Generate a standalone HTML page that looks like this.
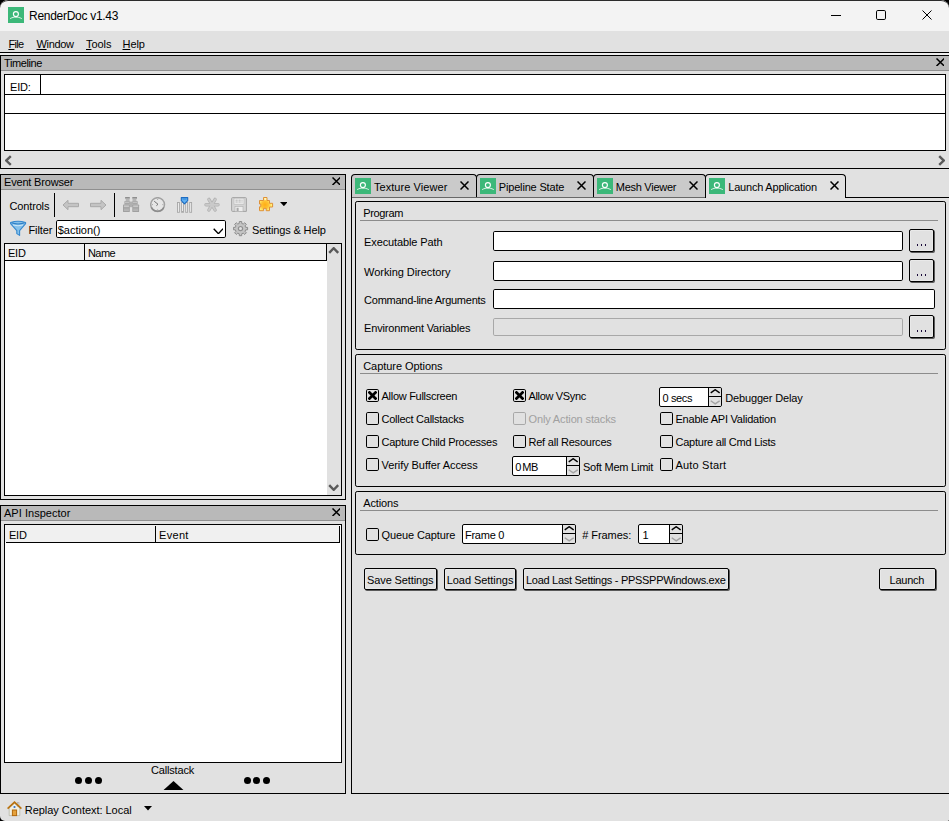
<!DOCTYPE html>
<html><head><meta charset="utf-8"><title>RenderDoc v1.43</title>
<style>
html,body{margin:0;padding:0}
body{width:949px;height:821px;overflow:hidden;background:#000;font-family:"Liberation Sans",sans-serif;}
#w{position:relative;width:949px;height:821px;background:#e1e1e1;border-radius:8px 8px 1.5px 5px;overflow:hidden}
#w>div,#w>svg,#w>span{position:absolute;display:block}
.t{white-space:pre;line-height:16px;height:16px}
.t u{text-decoration:underline;text-underline-offset:1px}
</style></head><body><div id="w">
<div style="left:0px;top:0px;width:949px;height:31px;background:#f3f3f3;border-top:1px solid #2b2b2b;box-sizing:border-box;border-radius:8px 8px 0 0"></div>
<svg style="left:8px;top:7px" width="16" height="16" viewBox="0 0 16 16"><rect width="16" height="16" fill="#3cb879"/><circle cx="7.9" cy="7.1" r="2.5" fill="none" stroke="#fff" stroke-width="1.15"/><path d="M2.1 11.6 C4.2 10.4 6 10.1 7.9 10.1 C9.8 10.1 11.6 10.4 13.8 11.6" fill="none" stroke="#fff" stroke-width="0.9" stroke-linecap="butt" opacity="0.9"/></svg>
<span class="t" style="left:29.00px;top:8px;font-size:12px;letter-spacing:-0.285px;color:#000">RenderDoc v1.43</span>
<div style="left:831px;top:15px;width:10px;height:1px;background:#000"></div>
<svg style="left:875px;top:9px" width="12" height="12" viewBox="0 0 12 12"><rect x="1.5" y="1.5" width="9" height="9" rx="1.3" fill="none" stroke="#000" stroke-width="1"/></svg>
<svg style="left:922px;top:10px" width="10" height="10" viewBox="0 0 10 10"><path d="M0.5 0.5 L9.5 9.5 M9.5 0.5 L0.5 9.5" stroke="#000" stroke-width="1.0" fill="none"/></svg>
<span class="t" style="left:8.40px;top:36px;font-size:11px;letter-spacing:-0.675px;color:#000"><u>F</u>ile</span>
<span class="t" style="left:36.50px;top:36px;font-size:11px;letter-spacing:-0.345px;color:#000"><u>W</u>indow</span>
<span class="t" style="left:86.00px;top:36px;font-size:11px;letter-spacing:-0.070px;color:#000"><u>T</u>ools</span>
<span class="t" style="left:122.50px;top:36px;font-size:11px;letter-spacing:-0.074px;color:#000"><u>H</u>elp</span>
<div style="left:0px;top:52px;width:949px;height:1px;background:#000"></div>
<div style="left:0px;top:53px;width:949px;height:2px;background:#ededed"></div>
<div style="left:0px;top:55px;width:949px;height:1px;background:#000"></div>
<div style="left:1px;top:56px;width:948px;height:14px;background:#b9b9b9"></div>
<div style="left:1px;top:70px;width:948px;height:1px;background:#8f8f8f"></div>
<div style="left:0px;top:55px;width:1px;height:114px;background:#000"></div>
<div style="left:0px;top:168px;width:949px;height:1px;background:#000"></div>
<span class="t" style="left:4.00px;top:55px;font-size:11px;letter-spacing:-0.394px;color:#000">Timeline</span>
<svg style="left:935.7px;top:57.8px" width="8.799999999999955" height="8.600000000000009" viewBox="0 0 8.799999999999955 8.600000000000009"><path d="M0.5 0.5 L8.299999999999955 8.100000000000009 M8.299999999999955 0.5 L0.5 8.100000000000009" stroke="#000" stroke-width="1.5" fill="none"/></svg>
<div style="left:4px;top:74px;width:942px;height:77px;box-sizing:border-box;border:1px solid #000;background:#fff;border-radius:0px;"></div>
<div style="left:5px;top:94px;width:940px;height:1px;background:#000"></div>
<div style="left:5px;top:113px;width:940px;height:1px;background:#000"></div>
<div style="left:40px;top:75px;width:1px;height:19px;background:#000"></div>
<span class="t" style="left:10.00px;top:79px;font-size:11px;letter-spacing:-0.164px;color:#000">EID:</span>
<svg style="left:4.8px;top:155.4px" width="7.000000000000001" height="11.199999999999989" viewBox="0 0 7.000000000000001 11.199999999999989"><path d="M5.800000000000001 1.2 L1.2 5.599999999999994 L5.800000000000001 9.99999999999999" stroke="#595959" stroke-width="2.4" fill="none" stroke-linejoin="miter"/></svg>
<svg style="left:938.2px;top:155.4px" width="7.0" height="11.199999999999989" viewBox="0 0 7.0 11.199999999999989"><path d="M1.2 1.2 L5.8 5.599999999999994 L1.2 9.99999999999999" stroke="#595959" stroke-width="2.4" fill="none" stroke-linejoin="miter"/></svg>
<div style="left:0px;top:174px;width:346px;height:326px;box-sizing:border-box;border:1px solid #000;background:#e1e1e1;border-radius:0px;"></div>
<div style="left:1px;top:175px;width:344px;height:14px;background:#b9b9b9"></div>
<div style="left:1px;top:189px;width:344px;height:1px;background:#8f8f8f"></div>
<span class="t" style="left:4.00px;top:174px;font-size:11px;letter-spacing:-0.177px;color:#000">Event Browser</span>
<svg style="left:331.6px;top:176.6px" width="8.799999999999955" height="8.599999999999994" viewBox="0 0 8.799999999999955 8.599999999999994"><path d="M0.5 0.5 L8.299999999999955 8.099999999999994 M8.299999999999955 0.5 L0.5 8.099999999999994" stroke="#000" stroke-width="1.5" fill="none"/></svg>
<span class="t" style="left:9.50px;top:198px;font-size:11px;letter-spacing:-0.151px;color:#000">Controls</span>
<div style="left:54px;top:193px;width:1px;height:24px;background:#000"></div>
<div style="left:114px;top:193px;width:1px;height:24px;background:#000"></div>
<svg style="left:62px;top:197px" width="18" height="16" viewBox="0 0 18 16"><path d="M1 8 L6 3.3 L6 6.3 L16.5 6.3 L16.5 9.7 L6 9.7 L6 12.7 Z" fill="#c4c4c4" stroke="#a9a9a9" stroke-width="1" stroke-linejoin="round"/></svg>
<svg style="left:89px;top:197px" width="18" height="16" viewBox="0 0 18 16"><path d="M17 8 L12 3.3 L12 6.3 L1.5 6.3 L1.5 9.7 L12 9.7 L12 12.7 Z" fill="#c4c4c4" stroke="#a9a9a9" stroke-width="1" stroke-linejoin="round"/></svg>
<svg style="left:123px;top:197px" width="17" height="16" viewBox="0 0 17 16"><rect x="6.6" y="4.6" width="3" height="5.6" fill="#b0b0b0"/>
<g><rect x="2.1" y="0" width="4.7" height="1.7" fill="#8f8f8f"/><rect x="2.7" y="1.7" width="3.9" height="2.6" fill="#b6b6b6"/><rect x="1.4" y="4.2" width="5.4" height="3.4" fill="#a4a4a4"/><rect x="2" y="5" width="4.2" height="1.1" fill="#c2c2c2"/><rect x="0" y="7.6" width="6.8" height="7.5" rx="0.7" fill="#a0a0a0"/><rect x="0.9" y="8.5" width="5" height="1.3" fill="#d2d2d2"/><rect x="0.9" y="10.6" width="5" height="1" fill="#b4b4b4"/><rect x="0.9" y="12.5" width="5" height="1.1" fill="#c6c6c6"/></g>
<g transform="translate(16.1,0) scale(-1,1)"><rect x="2.1" y="0" width="4.7" height="1.7" fill="#8f8f8f"/><rect x="2.7" y="1.7" width="3.9" height="2.6" fill="#b6b6b6"/><rect x="1.4" y="4.2" width="5.4" height="3.4" fill="#a4a4a4"/><rect x="2" y="5" width="4.2" height="1.1" fill="#c2c2c2"/><rect x="0" y="7.6" width="6.8" height="7.5" rx="0.7" fill="#a0a0a0"/><rect x="0.9" y="8.5" width="5" height="1.3" fill="#d2d2d2"/><rect x="0.9" y="10.6" width="5" height="1" fill="#b4b4b4"/><rect x="0.9" y="12.5" width="5" height="1.1" fill="#c6c6c6"/></g></svg>
<svg style="left:150px;top:197px" width="16" height="16" viewBox="0 0 16 16"><circle cx="7.6" cy="7.6" r="6.9" fill="#e6e6e6" stroke="#a2a2a2" stroke-width="1.5"/><path d="M1.4 10.4 A6.9 6.9 0 0 0 13.8 10.4" fill="none" stroke="#8c8c8c" stroke-width="1.5"/><path d="M4.2 4.2 L8 7.3 L6.4 8.7" fill="none" stroke="#6c6c6c" stroke-width="0.95"/><g fill="#9a9a9a"><rect x="7.2" y="2" width="0.9" height="0.9"/><rect x="7.2" y="12.4" width="0.9" height="0.9"/><rect x="2" y="7.2" width="0.9" height="0.9"/><rect x="12.4" y="7.2" width="0.9" height="0.9"/></g></svg>
<svg style="left:177px;top:197px" width="16" height="16" viewBox="0 0 16 16"><g fill="#efefef" stroke="#a6a6a6" stroke-width="0.9"><rect x="0.5" y="5.5" width="1.9" height="9.8"/><rect x="4.6" y="5.5" width="1.9" height="9.8"/><rect x="8.7" y="5.5" width="1.9" height="9.8"/><rect x="12.7" y="5.5" width="1.9" height="9.8"/></g>
<path d="M4.3 0.6 L10.7 0.6 L10.7 3.6 L7.5 6.9 L4.3 3.6 Z" fill="#5fb0f2" stroke="#1d6cc2" stroke-width="1.1" stroke-linejoin="round"/><path d="M5.6 2.1 H9.4" stroke="#2f86d8" stroke-width="0.9"/></svg>
<svg style="left:204px;top:197px" width="16" height="16" viewBox="0 0 16 16"><g stroke="#b2b2b2" stroke-width="3.4" stroke-linecap="round"><path d="M2 7.7 L14 7.7"/><path d="M4.9 2.4 L11.1 13"/><path d="M11.1 2.4 L4.9 13"/></g><g stroke="#cacaca" stroke-width="1.9" stroke-linecap="round"><path d="M2 7.7 L14 7.7"/><path d="M4.9 2.4 L11.1 13"/><path d="M11.1 2.4 L4.9 13"/></g></svg>
<svg style="left:231px;top:197px" width="16" height="16" viewBox="0 0 16 16"><path d="M0.6 1.6 Q0.6 0.6 1.6 0.6 L14.4 0.6 Q15.4 0.6 15.4 1.6 L15.4 14.4 L1.6 14.4 Q0.6 14.4 0.6 13.4 Z" fill="#d4d4d4" stroke="#a4a4a4" stroke-width="1"/>
<rect x="3" y="1.2" width="10" height="6" fill="#ececec" stroke="#b8b8b8" stroke-width="0.6"/>
<path d="M4.5 3.2 H11.5 M4.5 5 H11.5" stroke="#a8a8a8" stroke-width="0.8" stroke-dasharray="2.2 0.8"/>
<rect x="4" y="9.6" width="8" height="4.8" fill="#ededed" stroke="#b0b0b0" stroke-width="0.6"/><rect x="5.6" y="10.8" width="2" height="3.2" fill="#a8a8a8"/></svg>
<svg style="left:259px;top:197px" width="15" height="15" viewBox="0 0 15 15"><defs><radialGradient id="pz" cx="0.42" cy="0.55" r="0.5"><stop offset="0" stop-color="#ffad14"/><stop offset="0.55" stop-color="#ffc233"/><stop offset="1" stop-color="#fff27e"/></radialGradient></defs><path d="M4.5 0.5 H8 V3.5 H10.5 V6.3 H13.6 V10 H10.5 V13.7 H7.2 V11.3 H4.6 V13.7 H0.5 V9.8 H1.8 V7 H0.5 V3.5 H4.5 Z" fill="url(#pz)" stroke="#df9037" stroke-width="1" stroke-linejoin="round"/><rect x="5.4" y="1.2" width="1.8" height="1.6" fill="#fff6d8"/></svg>
<svg style="left:279.6px;top:202px" width="7.7999999999999545" height="4.199999999999989" viewBox="0 0 7.7999999999999545 4.199999999999989"><path d="M0 0 L7.7999999999999545 0 L3.8999999999999773 4.199999999999989 Z" fill="#000"/></svg>
<svg style="left:10px;top:220px" width="17" height="17" viewBox="0 0 17 17"><path d="M0.6 2.5 Q8 0.1 15.6 2.5 L15.6 3.6 L9.6 10.6 L9.6 15.4 L6.8 13.6 L6.8 10.6 L0.6 3.6 Z" fill="#86c1ea" stroke="#3588cf" stroke-width="1.1" stroke-linejoin="round"/><path d="M1.6 2.8 Q8 5.2 14.6 2.8" fill="none" stroke="#2f7fc6" stroke-width="1.2"/><path d="M3 5 Q8 6.6 13 5" fill="none" stroke="#d6ecfa" stroke-width="0.9"/></svg>
<span class="t" style="left:28.50px;top:222px;font-size:11px;letter-spacing:-0.109px;color:#000">Filter</span>
<div style="left:56px;top:220px;width:170px;height:18px;box-sizing:border-box;border:1px solid #000;background:#fff;border-radius:1.8px;"></div>
<span class="t" style="left:57.70px;top:222px;font-size:11px;letter-spacing:-0.012px;color:#000">$action()</span>
<svg style="left:212.6px;top:227.8px" width="10.800000000000011" height="6.399999999999977" viewBox="0 0 10.800000000000011 6.399999999999977"><path d="M0.7 0.7 L5.400000000000006 5.699999999999977 L10.100000000000012 0.7" stroke="#000" stroke-width="1.4" fill="none" stroke-linejoin="miter"/></svg>
<svg style="left:233px;top:221px" width="16" height="16" viewBox="0 0 16 16"><path d="M6.22 2.46 L6.32 0.50 L8.68 0.50 L8.78 2.46 L10.23 3.06 L11.69 1.74 L13.36 3.41 L12.04 4.87 L12.64 6.32 L14.60 6.42 L14.60 8.78 L12.64 8.88 L12.04 10.33 L13.36 11.79 L11.69 13.46 L10.23 12.14 L8.78 12.74 L8.68 14.70 L6.32 14.70 L6.22 12.74 L4.77 12.14 L3.31 13.46 L1.64 11.79 L2.96 10.33 L2.36 8.88 L0.40 8.78 L0.40 6.42 L2.36 6.32 L2.96 4.87 L1.64 3.41 L3.31 1.74 L4.77 3.06Z" fill="#c4c4c4" stroke="#8c8c8c" stroke-width="1" stroke-linejoin="round"/><circle cx="7.5" cy="7.6" r="2.1" fill="#e1e1e1" stroke="#909090" stroke-width="1.2"/></svg>
<span class="t" style="left:252.00px;top:222px;font-size:11px;letter-spacing:-0.144px;color:#000">Settings &amp; Help</span>
<div style="left:4px;top:243px;width:338px;height:253px;box-sizing:border-box;border:1px solid #000;background:#fff;border-radius:0px;"></div>
<div style="left:5px;top:244px;width:321px;height:16px;background:#f0f0f0"></div>
<div style="left:5px;top:260px;width:322px;height:1px;background:#000"></div>
<div style="left:326px;top:244px;width:1px;height:16px;background:#000"></div>
<span class="t" style="left:8.00px;top:245px;font-size:11px;letter-spacing:-0.218px;color:#000">EID</span>
<div style="left:84px;top:244px;width:1px;height:16px;background:#000"></div>
<span class="t" style="left:87.90px;top:245px;font-size:11px;letter-spacing:-0.514px;color:#000">Name</span>
<div style="left:327px;top:244px;width:14px;height:251px;background:#e1e1e1"></div>
<svg style="left:328.4px;top:247.4px" width="11.400000000000034" height="7.0" viewBox="0 0 11.400000000000034 7.0"><path d="M1.2 5.8 L5.700000000000017 1.2 L10.200000000000035 5.8" stroke="#595959" stroke-width="2.4" fill="none" stroke-linejoin="miter"/></svg>
<svg style="left:328.4px;top:484.4px" width="11.400000000000034" height="7.0" viewBox="0 0 11.400000000000034 7.0"><path d="M1.2 1.2 L5.700000000000017 5.8 L10.200000000000035 1.2" stroke="#595959" stroke-width="2.4" fill="none" stroke-linejoin="miter"/></svg>
<div style="left:0px;top:505px;width:346px;height:289px;box-sizing:border-box;border:1px solid #000;background:#e1e1e1;border-radius:0px;"></div>
<div style="left:1px;top:506px;width:344px;height:14px;background:#b9b9b9"></div>
<div style="left:1px;top:520px;width:344px;height:1px;background:#8f8f8f"></div>
<span class="t" style="left:4.00px;top:505px;font-size:11px;letter-spacing:0.031px;color:#000">API Inspector</span>
<svg style="left:331.6px;top:507.6px" width="8.799999999999955" height="8.600000000000023" viewBox="0 0 8.799999999999955 8.600000000000023"><path d="M0.5 0.5 L8.299999999999955 8.100000000000023 M8.299999999999955 0.5 L0.5 8.100000000000023" stroke="#000" stroke-width="1.5" fill="none"/></svg>
<div style="left:4px;top:524px;width:338px;height:239px;box-sizing:border-box;border:1px solid #000;background:#fff;border-radius:0px;"></div>
<div style="left:5px;top:525px;width:334px;height:17px;background:#f0f0f0"></div>
<div style="left:6px;top:542px;width:334px;height:1px;background:#000"></div>
<div style="left:339px;top:526px;width:1px;height:16px;background:#000"></div>
<span class="t" style="left:9.00px;top:527px;font-size:11px;letter-spacing:-0.218px;color:#000">EID</span>
<div style="left:155px;top:526px;width:1px;height:16px;background:#000"></div>
<span class="t" style="left:159.00px;top:527px;font-size:11px;letter-spacing:0.318px;color:#000">Event</span>
<div style="left:75.0px;top:776.5px;width:7px;height:7px;background:#000;border-radius:50%"></div>
<div style="left:84.7px;top:776.5px;width:7px;height:7px;background:#000;border-radius:50%"></div>
<div style="left:94.5px;top:776.5px;width:7px;height:7px;background:#000;border-radius:50%"></div>
<div style="left:243.5px;top:776.5px;width:7px;height:7px;background:#000;border-radius:50%"></div>
<div style="left:253.3px;top:776.5px;width:7px;height:7px;background:#000;border-radius:50%"></div>
<div style="left:263.3px;top:776.5px;width:7px;height:7px;background:#000;border-radius:50%"></div>
<span class="t" style="left:151.00px;top:762px;font-size:11px;letter-spacing:-0.178px;color:#000">Callstack</span>
<svg style="left:162.6px;top:780.5px" width="21.0" height="9.5" viewBox="0 0 21.0 9.5"><path d="M0 9.5 L10.5 0 L21.0 9.5 Z" fill="#000"/></svg>
<svg style="left:7px;top:800.5px" width="15" height="16" viewBox="0 0 15 16"><path d="M2.2 7 L2.2 14.6 L12.8 14.6 L12.8 7 L7.5 2.4 Z" fill="#f1f0e3" stroke="#b9b9aa" stroke-width="0.8"/>
<rect x="10.4" y="1.6" width="1.6" height="4" fill="#d8d8d0" stroke="#aaa" stroke-width="0.5"/>
<path d="M0.6 7.6 L7.5 1.2 L14.4 7.6" fill="none" stroke="#b9720f" stroke-width="1.7" stroke-linejoin="miter"/>
<rect x="5.4" y="9" width="4.2" height="5.6" fill="#e5a13a" stroke="#b3690c" stroke-width="1"/>
<circle cx="7.5" cy="6" r="1.1" fill="#2f6fd0"/></svg>
<span class="t" style="left:24.80px;top:802px;font-size:11px;letter-spacing:-0.036px;color:#000">Replay Context: Local</span>
<svg style="left:143.5px;top:806px" width="8.0" height="4.600000000000023" viewBox="0 0 8.0 4.600000000000023"><path d="M0 0 L8.0 0 L4.0 4.600000000000023 Z" fill="#000"/></svg>
<div style="left:351px;top:177px;width:1px;height:617px;background:#000"></div>
<div style="left:351px;top:793px;width:598px;height:1px;background:#000"></div>
<div style="left:352px;top:197px;width:353px;height:1px;background:#686868"></div>
<div style="left:846px;top:197px;width:103px;height:1px;background:#000"></div>
<div style="left:351px;top:174px;width:126px;height:23px;box-sizing:border-box;border:1px solid #000;border-bottom:none;border-radius:4px 4px 0 0;background:#cacaca"></div>
<svg style="left:355px;top:178px" width="16" height="16" viewBox="0 0 16 16"><rect width="16" height="16" fill="#3cb879"/><circle cx="7.9" cy="7.1" r="2.5" fill="none" stroke="#fff" stroke-width="1.15"/><path d="M2.1 11.6 C4.2 10.4 6 10.1 7.9 10.1 C9.8 10.1 11.6 10.4 13.8 11.6" fill="none" stroke="#fff" stroke-width="0.9" stroke-linecap="butt" opacity="0.9"/></svg>
<span class="t" style="left:373.90px;top:179px;font-size:11px;letter-spacing:0.073px;color:#000">Texture Viewer</span>
<svg style="left:459.5px;top:181.3px" width="9.0" height="9.0" viewBox="0 0 9.0 9.0"><path d="M0.5 0.5 L8.5 8.5 M8.5 0.5 L0.5 8.5" stroke="#000" stroke-width="1.5" fill="none"/></svg>
<div style="left:476px;top:174px;width:118px;height:23px;box-sizing:border-box;border:1px solid #000;border-bottom:none;border-radius:4px 4px 0 0;background:#cacaca"></div>
<svg style="left:480px;top:178px" width="16" height="16" viewBox="0 0 16 16"><rect width="16" height="16" fill="#3cb879"/><circle cx="7.9" cy="7.1" r="2.5" fill="none" stroke="#fff" stroke-width="1.15"/><path d="M2.1 11.6 C4.2 10.4 6 10.1 7.9 10.1 C9.8 10.1 11.6 10.4 13.8 11.6" fill="none" stroke="#fff" stroke-width="0.9" stroke-linecap="butt" opacity="0.9"/></svg>
<span class="t" style="left:498.80px;top:179px;font-size:11px;letter-spacing:-0.175px;color:#000">Pipeline State</span>
<svg style="left:576.5px;top:181.3px" width="9.0" height="9.0" viewBox="0 0 9.0 9.0"><path d="M0.5 0.5 L8.5 8.5 M8.5 0.5 L0.5 8.5" stroke="#000" stroke-width="1.5" fill="none"/></svg>
<div style="left:593px;top:174px;width:113px;height:23px;box-sizing:border-box;border:1px solid #000;border-bottom:none;border-radius:4px 4px 0 0;background:#cacaca"></div>
<svg style="left:597px;top:178px" width="16" height="16" viewBox="0 0 16 16"><rect width="16" height="16" fill="#3cb879"/><circle cx="7.9" cy="7.1" r="2.5" fill="none" stroke="#fff" stroke-width="1.15"/><path d="M2.1 11.6 C4.2 10.4 6 10.1 7.9 10.1 C9.8 10.1 11.6 10.4 13.8 11.6" fill="none" stroke="#fff" stroke-width="0.9" stroke-linecap="butt" opacity="0.9"/></svg>
<span class="t" style="left:615.80px;top:179px;font-size:11px;letter-spacing:-0.278px;color:#000">Mesh Viewer</span>
<svg style="left:688.6px;top:181.3px" width="9.0" height="9.0" viewBox="0 0 9.0 9.0"><path d="M0.5 0.5 L8.5 8.5 M8.5 0.5 L0.5 8.5" stroke="#000" stroke-width="1.5" fill="none"/></svg>
<div style="left:705px;top:174px;width:141px;height:24px;box-sizing:border-box;border:1px solid #000;border-bottom:none;border-radius:4px 4px 0 0;background:#e1e1e1"></div>
<svg style="left:709px;top:178px" width="16" height="16" viewBox="0 0 16 16"><rect width="16" height="16" fill="#3cb879"/><circle cx="7.9" cy="7.1" r="2.5" fill="none" stroke="#fff" stroke-width="1.15"/><path d="M2.1 11.6 C4.2 10.4 6 10.1 7.9 10.1 C9.8 10.1 11.6 10.4 13.8 11.6" fill="none" stroke="#fff" stroke-width="0.9" stroke-linecap="butt" opacity="0.9"/></svg>
<span class="t" style="left:728.30px;top:179px;font-size:11px;letter-spacing:-0.209px;color:#000">Launch Application</span>
<svg style="left:829.7px;top:181.3px" width="9.0" height="9.0" viewBox="0 0 9.0 9.0"><path d="M0.5 0.5 L8.5 8.5 M8.5 0.5 L0.5 8.5" stroke="#000" stroke-width="1.5" fill="none"/></svg>
<div style="left:355px;top:201px;width:591px;height:149px;box-sizing:border-box;border:1px solid #000;background:transparent;border-radius:2.2px;"></div>
<span class="t" style="left:363.20px;top:205px;font-size:11px;letter-spacing:-0.330px;color:#000">Program</span>
<div style="left:360px;top:220px;width:578px;height:1px;background:#8c8c8c"></div>
<div style="left:355px;top:354px;width:591px;height:133px;box-sizing:border-box;border:1px solid #000;background:transparent;border-radius:2.2px;"></div>
<span class="t" style="left:363.20px;top:358px;font-size:11px;letter-spacing:-0.050px;color:#000">Capture Options</span>
<div style="left:360px;top:373px;width:578px;height:1px;background:#8c8c8c"></div>
<div style="left:355px;top:491px;width:591px;height:64px;box-sizing:border-box;border:1px solid #000;background:transparent;border-radius:2.2px;"></div>
<span class="t" style="left:363.20px;top:495px;font-size:11px;letter-spacing:-0.145px;color:#000">Actions</span>
<div style="left:360px;top:510px;width:578px;height:1px;background:#8c8c8c"></div>
<span class="t" style="left:364.10px;top:234px;font-size:11px;letter-spacing:-0.115px;color:#000">Executable Path</span>
<div style="left:493px;top:231px;width:410px;height:20px;box-sizing:border-box;border:1px solid #000;background:#fff;border-radius:1.8px;"></div>
<div style="left:909px;top:229px;width:25px;height:23px;box-sizing:border-box;border:1px solid #000;background:#e1e1e1;border-radius:2px;box-shadow:1px 1px 0 0 rgba(0,0,0,.6), inset 0 0 0 1px #e9e9e9"></div>
<div style="left:916.8px;top:244px;width:1.4px;height:2px;background:#1a0a3a"></div>
<div style="left:920.8px;top:244px;width:1.4px;height:2px;background:#1a0a3a"></div>
<div style="left:924.8px;top:244px;width:1.4px;height:2px;background:#1a0a3a"></div>
<span class="t" style="left:364.10px;top:264px;font-size:11px;letter-spacing:-0.057px;color:#000">Working Directory</span>
<div style="left:493px;top:261px;width:410px;height:20px;box-sizing:border-box;border:1px solid #000;background:#fff;border-radius:1.8px;"></div>
<div style="left:909px;top:259px;width:25px;height:23px;box-sizing:border-box;border:1px solid #000;background:#e1e1e1;border-radius:2px;box-shadow:1px 1px 0 0 rgba(0,0,0,.6), inset 0 0 0 1px #e9e9e9"></div>
<div style="left:916.8px;top:274px;width:1.4px;height:2px;background:#1a0a3a"></div>
<div style="left:920.8px;top:274px;width:1.4px;height:2px;background:#1a0a3a"></div>
<div style="left:924.8px;top:274px;width:1.4px;height:2px;background:#1a0a3a"></div>
<span class="t" style="left:364.10px;top:292px;font-size:11px;letter-spacing:-0.261px;color:#000">Command-line Arguments</span>
<div style="left:493px;top:289px;width:442px;height:20px;box-sizing:border-box;border:1px solid #000;background:#fff;border-radius:1.8px;"></div>
<span class="t" style="left:364.10px;top:320px;font-size:11px;letter-spacing:-0.177px;color:#000">Environment Variables</span>
<div style="left:493px;top:318px;width:410px;height:18px;box-sizing:border-box;border:1px solid #a8a8a8;background:#e1e1e1;border-radius:1.8px;"></div>
<div style="left:909px;top:315px;width:25px;height:23px;box-sizing:border-box;border:1px solid #000;background:#e1e1e1;border-radius:2px;box-shadow:1px 1px 0 0 rgba(0,0,0,.6), inset 0 0 0 1px #e9e9e9"></div>
<div style="left:916.8px;top:330px;width:1.4px;height:2px;background:#1a0a3a"></div>
<div style="left:920.8px;top:330px;width:1.4px;height:2px;background:#1a0a3a"></div>
<div style="left:924.8px;top:330px;width:1.4px;height:2px;background:#1a0a3a"></div>
<div style="left:366px;top:389px;width:13px;height:13px;box-sizing:border-box;border:1px solid #000;background:#e1e1e1;border-radius:1.8px;"></div>
<svg style="left:368px;top:391px" width="9" height="9" viewBox="0 0 9 9"><path d="M1.5 1.5 L7.5 7.5 M7.5 1.5 L1.5 7.5" stroke="#000" stroke-width="2.7" stroke-linecap="square" fill="none"/></svg>
<span class="t" style="left:381.50px;top:388px;font-size:11px;letter-spacing:-0.279px;color:#000">Allow Fullscreen</span>
<div style="left:366px;top:412px;width:13px;height:13px;box-sizing:border-box;border:1px solid #000;background:#e1e1e1;border-radius:1.8px;"></div>
<span class="t" style="left:381.50px;top:411px;font-size:11px;letter-spacing:-0.259px;color:#000">Collect Callstacks</span>
<div style="left:366px;top:435px;width:13px;height:13px;box-sizing:border-box;border:1px solid #000;background:#e1e1e1;border-radius:1.8px;"></div>
<span class="t" style="left:381.50px;top:434px;font-size:11px;letter-spacing:-0.262px;color:#000">Capture Child Processes</span>
<div style="left:366px;top:458px;width:13px;height:13px;box-sizing:border-box;border:1px solid #000;background:#e1e1e1;border-radius:1.8px;"></div>
<span class="t" style="left:381.50px;top:457px;font-size:11px;letter-spacing:-0.070px;color:#000">Verify Buffer Access</span>
<div style="left:513px;top:389px;width:13px;height:13px;box-sizing:border-box;border:1px solid #000;background:#e1e1e1;border-radius:1.8px;"></div>
<svg style="left:515px;top:391px" width="9" height="9" viewBox="0 0 9 9"><path d="M1.5 1.5 L7.5 7.5 M7.5 1.5 L1.5 7.5" stroke="#000" stroke-width="2.7" stroke-linecap="square" fill="none"/></svg>
<span class="t" style="left:528.50px;top:388px;font-size:11px;letter-spacing:-0.343px;color:#000">Allow VSync</span>
<div style="left:513px;top:412px;width:13px;height:13px;box-sizing:border-box;border:1px solid #a8a8a8;background:#e1e1e1;border-radius:1.8px;"></div>
<span class="t" style="left:528.50px;top:411px;font-size:11px;letter-spacing:-0.140px;color:#a0a0a0">Only Action stacks</span>
<div style="left:513px;top:435px;width:13px;height:13px;box-sizing:border-box;border:1px solid #000;background:#e1e1e1;border-radius:1.8px;"></div>
<span class="t" style="left:528.50px;top:434px;font-size:11px;letter-spacing:-0.220px;color:#000">Ref all Resources</span>
<div style="left:660px;top:412px;width:13px;height:13px;box-sizing:border-box;border:1px solid #000;background:#e1e1e1;border-radius:1.8px;"></div>
<span class="t" style="left:675.50px;top:411px;font-size:11px;letter-spacing:-0.220px;color:#000">Enable API Validation</span>
<div style="left:660px;top:435px;width:13px;height:13px;box-sizing:border-box;border:1px solid #000;background:#e1e1e1;border-radius:1.8px;"></div>
<span class="t" style="left:675.50px;top:434px;font-size:11px;letter-spacing:-0.242px;color:#000">Capture all Cmd Lists</span>
<div style="left:660px;top:458px;width:13px;height:13px;box-sizing:border-box;border:1px solid #000;background:#e1e1e1;border-radius:1.8px;"></div>
<span class="t" style="left:675.50px;top:457px;font-size:11px;letter-spacing:0.187px;color:#000">Auto Start</span>
<div style="left:659px;top:387px;width:63px;height:20px;box-sizing:border-box;border:1px solid #000;background:#fff;border-radius:2px;"></div>
<div style="left:709px;top:388px;width:12px;height:18px;background:#e1e1e1;border-radius:0 1.5px 1.5px 0"></div>
<div style="left:708px;top:388px;width:1px;height:18px;background:#000"></div>
<div style="left:709px;top:396px;width:12px;height:1px;background:#000"></div>
<svg style="left:709.5px;top:389.2px" width="10.399999999999977" height="4.600000000000023" viewBox="0 0 10.399999999999977 4.600000000000023"><path d="M0.725 3.8750000000000226 L5.199999999999989 0.725 L9.674999999999978 3.8750000000000226" stroke="#000" stroke-width="1.45" fill="none" stroke-linejoin="miter"/></svg>
<svg style="left:709.5px;top:400px" width="10.399999999999977" height="4.5" viewBox="0 0 10.399999999999977 4.5"><path d="M0.725 0.725 L5.199999999999989 3.775 L9.674999999999978 0.725" stroke="#a3a3a3" stroke-width="1.45" fill="none" stroke-linejoin="miter"/></svg>
<span class="t" style="left:662.50px;top:390px;font-size:11px;letter-spacing:-0.378px;color:#000">0 secs</span>
<span class="t" style="left:725.30px;top:390px;font-size:11px;letter-spacing:-0.161px;color:#000">Debugger Delay</span>
<div style="left:512px;top:456px;width:68px;height:20px;box-sizing:border-box;border:1px solid #000;background:#fff;border-radius:2px;"></div>
<div style="left:567px;top:457px;width:12px;height:18px;background:#e1e1e1;border-radius:0 1.5px 1.5px 0"></div>
<div style="left:566px;top:457px;width:1px;height:18px;background:#000"></div>
<div style="left:567px;top:465px;width:12px;height:1px;background:#000"></div>
<svg style="left:567.5px;top:458.2px" width="10.399999999999977" height="4.600000000000023" viewBox="0 0 10.399999999999977 4.600000000000023"><path d="M0.725 3.8750000000000226 L5.199999999999989 0.725 L9.674999999999978 3.8750000000000226" stroke="#000" stroke-width="1.45" fill="none" stroke-linejoin="miter"/></svg>
<svg style="left:567.5px;top:469px" width="10.399999999999977" height="4.5" viewBox="0 0 10.399999999999977 4.5"><path d="M0.725 0.725 L5.199999999999989 3.775 L9.674999999999978 0.725" stroke="#a3a3a3" stroke-width="1.45" fill="none" stroke-linejoin="miter"/></svg>
<span class="t" style="left:515.30px;top:459px;font-size:11px;letter-spacing:-0.450px;color:#000;word-spacing:-1.22px">0 MB</span>
<span class="t" style="left:583.00px;top:459px;font-size:11px;letter-spacing:-0.227px;color:#000">Soft Mem Limit</span>
<div style="left:366px;top:528px;width:13px;height:13px;box-sizing:border-box;border:1px solid #000;background:#e1e1e1;border-radius:1.8px;"></div>
<span class="t" style="left:381.50px;top:527px;font-size:11px;letter-spacing:-0.110px;color:#000">Queue Capture</span>
<div style="left:462px;top:524px;width:114px;height:20px;box-sizing:border-box;border:1px solid #000;background:#fff;border-radius:2px;"></div>
<div style="left:563px;top:525px;width:12px;height:18px;background:#e1e1e1;border-radius:0 1.5px 1.5px 0"></div>
<div style="left:562px;top:525px;width:1px;height:18px;background:#000"></div>
<div style="left:563px;top:533px;width:12px;height:1px;background:#000"></div>
<svg style="left:563.5px;top:526.2px" width="10.399999999999977" height="4.599999999999909" viewBox="0 0 10.399999999999977 4.599999999999909"><path d="M0.725 3.874999999999909 L5.199999999999989 0.725 L9.674999999999978 3.874999999999909" stroke="#000" stroke-width="1.45" fill="none" stroke-linejoin="miter"/></svg>
<svg style="left:563.5px;top:537px" width="10.399999999999977" height="4.5" viewBox="0 0 10.399999999999977 4.5"><path d="M0.725 0.725 L5.199999999999989 3.775 L9.674999999999978 0.725" stroke="#a3a3a3" stroke-width="1.45" fill="none" stroke-linejoin="miter"/></svg>
<span class="t" style="left:465.00px;top:527px;font-size:11px;letter-spacing:-0.259px;color:#000">Frame 0</span>
<span class="t" style="left:582.20px;top:527px;font-size:11px;letter-spacing:-0.064px;color:#000"># Frames:</span>
<div style="left:638px;top:524px;width:45px;height:20px;box-sizing:border-box;border:1px solid #000;background:#fff;border-radius:2px;"></div>
<div style="left:670px;top:525px;width:12px;height:18px;background:#e1e1e1;border-radius:0 1.5px 1.5px 0"></div>
<div style="left:669px;top:525px;width:1px;height:18px;background:#000"></div>
<div style="left:670px;top:533px;width:12px;height:1px;background:#000"></div>
<svg style="left:670.5px;top:526.2px" width="10.399999999999977" height="4.599999999999909" viewBox="0 0 10.399999999999977 4.599999999999909"><path d="M0.725 3.874999999999909 L5.199999999999989 0.725 L9.674999999999978 3.874999999999909" stroke="#000" stroke-width="1.45" fill="none" stroke-linejoin="miter"/></svg>
<svg style="left:670.5px;top:537px" width="10.399999999999977" height="4.5" viewBox="0 0 10.399999999999977 4.5"><path d="M0.725 0.725 L5.199999999999989 3.775 L9.674999999999978 0.725" stroke="#a3a3a3" stroke-width="1.45" fill="none" stroke-linejoin="miter"/></svg>
<span class="t" style="left:642.50px;top:527px;font-size:11px;letter-spacing:0.000px;color:#000">1</span>
<div style="left:364px;top:568px;width:73px;height:22px;box-sizing:border-box;border:1px solid #000;background:#e1e1e1;border-radius:2px;box-shadow:1px 1px 0 0 rgba(0,0,0,.6), inset 0 0 0 1px #e9e9e9"></div>
<span class="t" style="left:367.00px;top:572px;font-size:11px;letter-spacing:-0.106px;color:#000">Save Settings</span>
<div style="left:444px;top:568px;width:72px;height:22px;box-sizing:border-box;border:1px solid #000;background:#e1e1e1;border-radius:2px;box-shadow:1px 1px 0 0 rgba(0,0,0,.6), inset 0 0 0 1px #e9e9e9"></div>
<span class="t" style="left:446.70px;top:572px;font-size:11px;letter-spacing:-0.048px;color:#000">Load Settings</span>
<div style="left:523px;top:568px;width:206px;height:22px;box-sizing:border-box;border:1px solid #000;background:#e1e1e1;border-radius:2px;box-shadow:1px 1px 0 0 rgba(0,0,0,.6), inset 0 0 0 1px #e9e9e9"></div>
<span class="t" style="left:526.00px;top:572px;font-size:11px;letter-spacing:-0.285px;color:#000">Load Last Settings - PPSSPPWindows.exe</span>
<div style="left:879px;top:568px;width:57px;height:22px;box-sizing:border-box;border:1px solid #000;background:#e1e1e1;border-radius:2px;box-shadow:1px 1px 0 0 rgba(0,0,0,.6), inset 0 0 0 1px #e9e9e9"></div>
<span class="t" style="left:889.50px;top:572px;font-size:11px;letter-spacing:-0.238px;color:#000">Launch</span>
</div></body></html>
